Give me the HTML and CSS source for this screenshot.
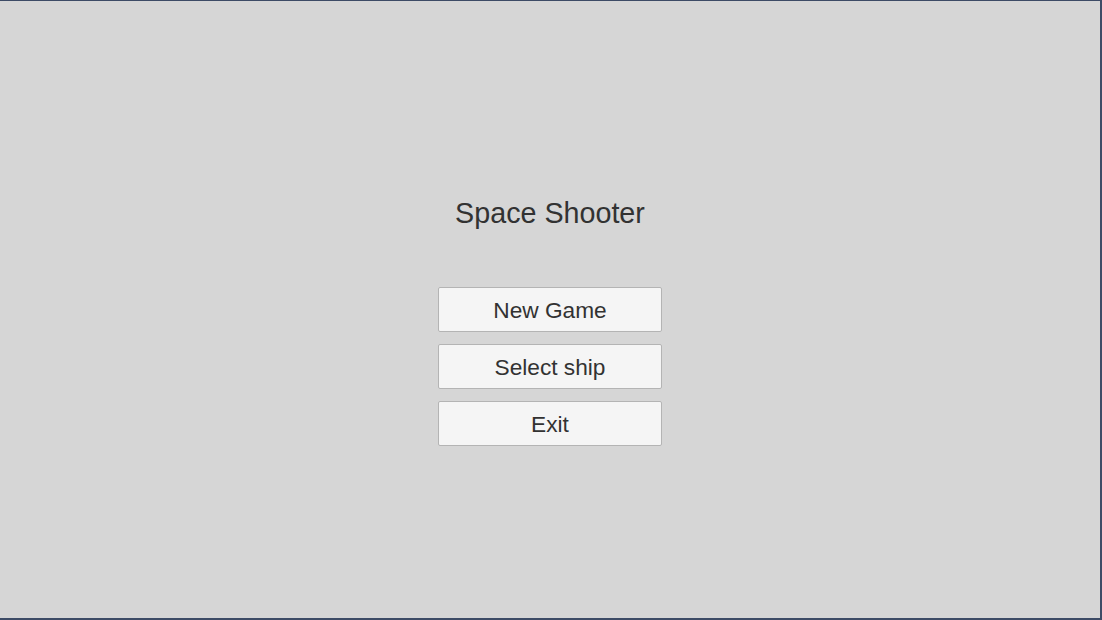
FILE: index.html
```html
<!DOCTYPE html>
<html>
<head>
<meta charset="utf-8">
<link rel="stylesheet" href="styles.css">
</head>
<body>
<div class="screen">
  <h1 class="title">Space Shooter</h1>
  <div class="menu">
    <button class="btn">New Game</button>
    <button class="btn">Select ship</button>
    <button class="btn">Exit</button>
  </div>
</div>
</body>
</html>
```
FILE: styles.css
```css
html, body {
  margin: 0;
  padding: 0;
}
body {
  width: 1102px;
  height: 620px;
  overflow: hidden;
  font-family: "Liberation Sans", Arial, sans-serif;
}
.screen {
  box-sizing: border-box;
  width: 1102px;
  height: 620px;
  background: #d6d6d6;
  border-top: 1px solid #3d4b66;
  border-right: 2px solid #3d4b66;
  border-bottom: 2px solid #3d4b66;
  display: flex;
  flex-direction: column;
  align-items: center;
  padding-top: 195px;
}
.title {
  margin: 0 0 57px 0;
  font-weight: normal;
  font-size: 28.7px;
  line-height: 34px;
  color: #323232;
}
.menu {
  display: flex;
  flex-direction: column;
  gap: 12px;
}
.btn {
  box-sizing: border-box;
  width: 224px;
  height: 45px;
  margin: 0;
  padding: 1px 0 0 0;
  background: #f5f5f5;
  border: 1px solid #b4b4b4;
  border-radius: 2px;
  font-family: "Liberation Sans", Arial, sans-serif;
  font-size: 22.7px;
  color: #323232;
  line-height: 42px;
  text-align: center;
}
```
